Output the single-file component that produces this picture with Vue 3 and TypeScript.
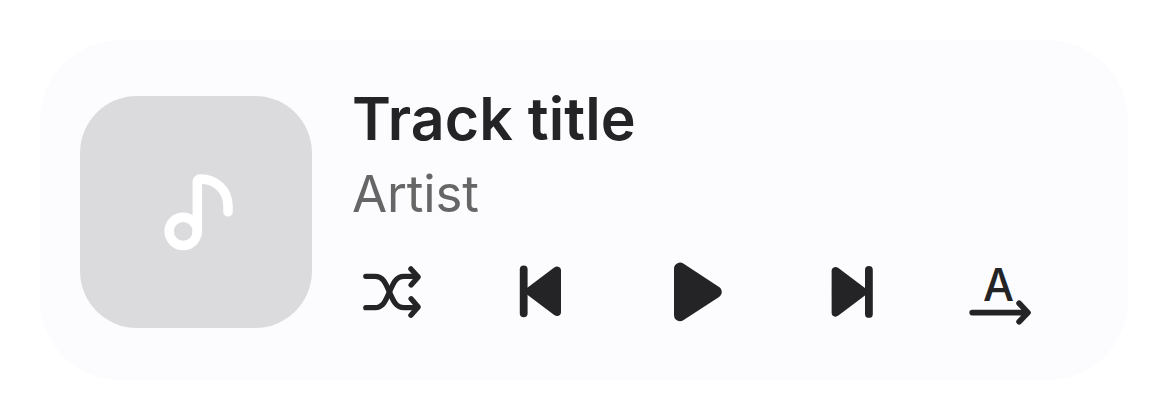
<script setup lang="ts">
interface Track {
  title: string
  artist: string
}

const track: Track = { title: 'Track title', artist: 'Artist' }
</script>

<template>
  <main class="stage">
    <section class="player">
      <div class="cover">
        <svg viewBox="0 0 232 232" aria-hidden="true">
          <circle cx="103.2" cy="135.3" r="14.1" />
          <path d="M117.3 135.3V86Q117.3 83 120.3 83C136 83 148 94.5 148 110V115.8" />
        </svg>
      </div>
      <div class="details">
        <h1 class="title">{{ track.title }}</h1>
        <p class="artist">{{ track.artist }}</p>
        <div class="controls">
          <button type="button" aria-label="Shuffle">
            <svg class="line" viewBox="0 0 80 80">
              <path d="M13.8 24.3H23C31 24.3 33.5 31 37.4 40S44 55.7 52 55.7H65" />
              <path d="M13.8 55.7H23C31 55.7 33.5 49 37.4 40S44 24.3 52 24.3H65" />
              <path d="M58.9 16.9L66.2 25L59.1 33M59.1 46.7L66.2 55L58.9 63.2" />
            </svg>
          </button>
          <button type="button" aria-label="Previous">
            <svg viewBox="0 0 80 80">
              <rect x="15.8" y="13.4" width="7.8" height="51.8" rx="3.9" />
              <path d="M23 35.9L50.2 15.4Q52 14.3 53.2 14.4Q57 14.8 57 18.6V60Q57 63.7 53.2 64.1Q52 64.2 50.2 63L23 42.5Z" />
            </svg>
          </button>
          <button type="button" aria-label="Play">
            <svg viewBox="0 0 80 80">
              <path class="play" d="M24 16.6V63.2L59.8 40Z" />
            </svg>
          </button>
          <button type="button" aria-label="Next">
            <svg viewBox="0 0 80 80">
              <g transform="translate(80.6 .6) scale(-1 1)">
                <rect x="15.8" y="13.4" width="7.8" height="51.8" rx="3.9" />
                <path d="M23 35.9L50.2 15.4Q52 14.3 53.2 14.4Q57 14.8 57 18.6V60Q57 63.7 53.2 64.1Q52 64.2 50.2 63L23 42.5Z" />
              </g>
            </svg>
          </button>
          <button type="button" aria-label="Autoplay">
            <svg viewBox="0 0 80 80">
              <text x="22.9" y="48.7" textLength="31" lengthAdjust="spacingAndGlyphs">A</text>
              <path class="arrow" d="M12.2 60.6H67M59.1 51.2L68 60.6L59.1 69.8" />
            </svg>
          </button>
        </div>
      </div>
    </section>
  </main>
</template>

<style>
body {
  background: #fff;
}
</style>

<style scoped>
.stage {
  box-sizing: border-box;
  width: 1168px;
  height: 420px;
  padding: 40px;
  font-family: Inter, "Liberation Sans", sans-serif;
}
.player {
  box-sizing: border-box;
  display: flex;
  align-items: flex-start;
  gap: 40px;
  height: 340px;
  padding: 56px 40px;
  border-radius: 80px;
  background: #fcfcff;
}
.cover {
  flex: none;
  width: 232px;
  height: 232px;
  border-radius: 57px;
  background: #dbdbdd;
}
.cover svg {
  display: block;
  fill: none;
  stroke: #fff;
  stroke-width: 9.5;
  stroke-linecap: round;
}
.details {
  display: flex;
  flex-direction: column;
}
.title {
  margin: -13px 0 0;
  font-size: 59px;
  font-weight: 600;
  line-height: 72px;
  letter-spacing: 0.1px;
  color: #242426;
  white-space: nowrap;
}
.artist {
  margin: 11px 0 0;
  font-size: 51px;
  font-weight: 400;
  line-height: 56px;
  letter-spacing: -0.2px;
  color: #666667;
}
.controls {
  display: flex;
  gap: 72px;
  margin-top: 30px;
}
button {
  width: 80px;
  height: 80px;
  padding: 0;
  border: 0;
  background: none;
}
button svg {
  display: block;
  width: 80px;
  height: 80px;
  fill: #242426;
  stroke-linecap: round;
  stroke-linejoin: round;
}
button .line {
  fill: none;
  stroke: #242426;
  stroke-width: 5.3;
}
.play {
  stroke: #242426;
  stroke-width: 12;
}
.arrow {
  fill: none;
  stroke: #242426;
  stroke-width: 5.7;
}
text {
  font-family: Inter, sans-serif;
  font-size: 45px;
  font-weight: 500;
}
</style>
